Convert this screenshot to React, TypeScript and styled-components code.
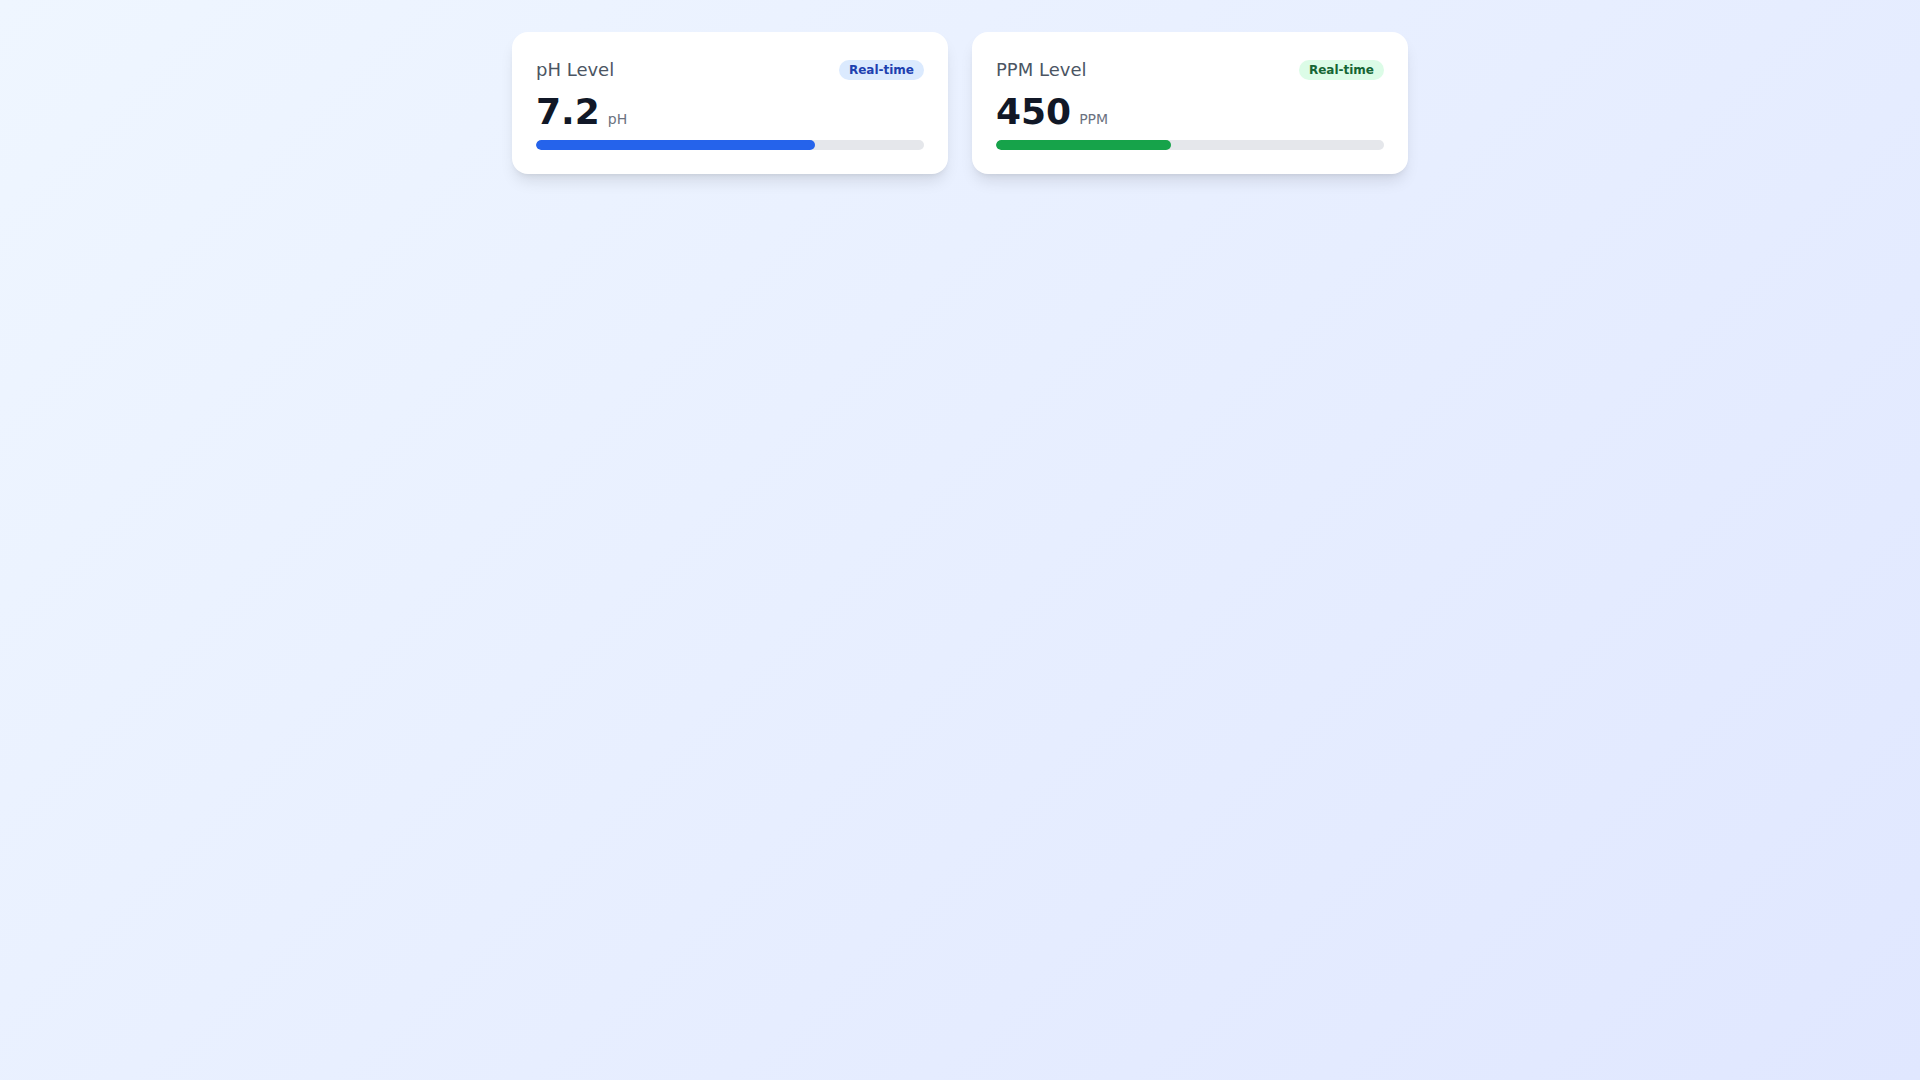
import React from "react";
import styled, { createGlobalStyle } from "styled-components";

const GlobalStyle = createGlobalStyle`
  html, body {
    margin: 0;
    padding: 0;
  }
  body {
    font-family: "DejaVu Sans", "Noto Sans", sans-serif;
  }
`;

const colors = {
  blue: { track: "#2563eb", badgeBg: "#dbeafe", badgeText: "#1e40af" },
  green: { track: "#16a34a", badgeBg: "#dcfce7", badgeText: "#166534" },
};

type Tone = keyof typeof colors;

interface Reading {
  title: string;
  value: string;
  unit: string;
  percent: number;
  tone: Tone;
}

const readings: Reading[] = [
  { title: "pH Level", value: "7.2", unit: "pH", percent: 72, tone: "blue" },
  { title: "PPM Level", value: "450", unit: "PPM", percent: 45, tone: "green" },
];

const MetricCard: React.FC<{ reading: Reading }> = ({ reading }) => {
  return (
    <Card>
      <Header>
        <Title>{reading.title}</Title>
        <Badge tone={reading.tone}>Real-time</Badge>
      </Header>
      <ValueRow>
        <Value>{reading.value}</Value>
        <Unit>{reading.unit}</Unit>
      </ValueRow>
      <Track>
        <Fill tone={reading.tone} style={{ width: `${reading.percent}%` }} />
      </Track>
    </Card>
  );
};

const App: React.FC = () => {
  return (
    <>
      <GlobalStyle />
      <Page>
        <Grid>
          {readings.map((r) => (
            <MetricCard key={r.title} reading={r} />
          ))}
        </Grid>
      </Page>
    </>
  );
};

const Page = styled.div`
  min-height: 100vh;
  box-sizing: border-box;
  padding: 32px;
  background: linear-gradient(135deg, #eff6ff 0%, #e0e7ff 100%);
`;

const Grid = styled.div`
  max-width: 896px;
  margin: 0 auto;
  display: grid;
  grid-template-columns: 1fr 1fr;
  gap: 24px;
`;

const Card = styled.div`
  background: #ffffff;
  border-radius: 16px;
  padding: 24px;
  box-shadow: 0 10px 15px -3px rgba(0, 0, 0, 0.1), 0 4px 6px -4px rgba(0, 0, 0, 0.1);
`;

const Header = styled.div`
  display: flex;
  justify-content: space-between;
  align-items: center;
`;

const Title = styled.h3`
  margin: 0;
  font-size: 18px;
  line-height: 28px;
  font-weight: 400;
  color: #4b5563;
`;

const Badge = styled.span<{ tone: Tone }>`
  font-size: 12px;
  line-height: 16px;
  font-weight: 700;
  padding: 2px 10px;
  border-radius: 9999px;
  background: ${(p) => colors[p.tone].badgeBg};
  color: ${(p) => colors[p.tone].badgeText};
`;

const ValueRow = styled.div`
  margin-top: 8px;
  display: flex;
  align-items: baseline;
`;

const Value = styled.span`
  font-size: 36px;
  line-height: 40px;
  font-weight: 700;
  color: #111827;
`;

const Unit = styled.span`
  margin-left: 8px;
  font-size: 14px;
  line-height: 20px;
  color: #6b7280;
`;

const Track = styled.div`
  margin-top: 8px;
  height: 10px;
  border-radius: 9999px;
  background: #e5e7eb;
  overflow: hidden;
`;

const Fill = styled.div<{ tone: Tone }>`
  height: 100%;
  border-radius: 9999px;
  background: ${(p) => colors[p.tone].track};
`;

export default App;
